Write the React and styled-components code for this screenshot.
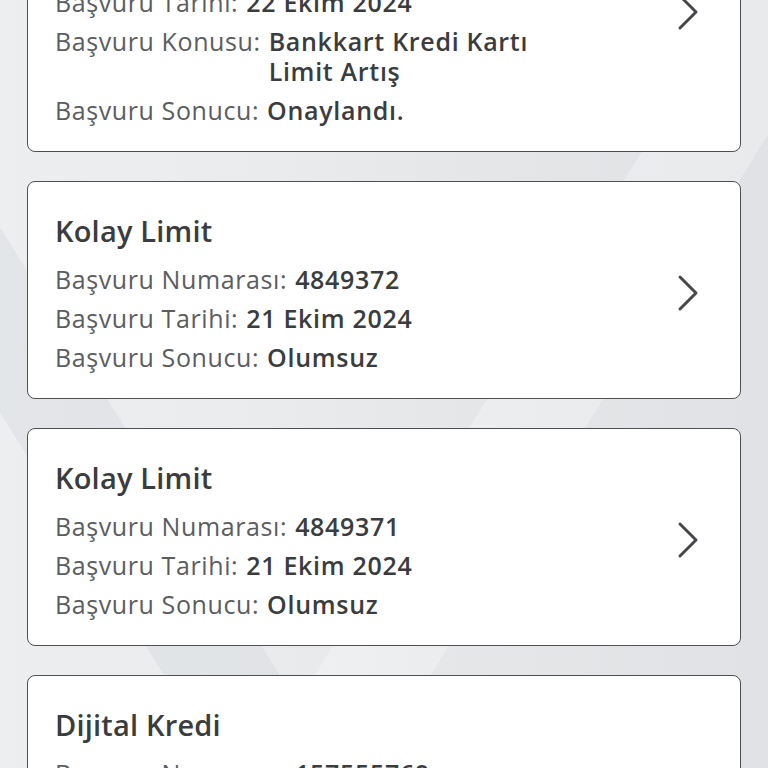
import React, { useLayoutEffect, useRef } from "react";
import styled, { createGlobalStyle } from "styled-components";

const applications = [
  {
    title: "Bankkart Limit Artış",
    rows: [
      { label: "Başvuru Numarası:", value: "4851204" },
      { label: "Başvuru Tarihi:", value: "22 Ekim 2024" },
      { label: "Başvuru Konusu:", value: "Bankkart Kredi Kartı Limit Artış" },
      { label: "Başvuru Sonucu:", value: "Onaylandı." },
    ],
  },
  {
    title: "Kolay Limit",
    rows: [
      { label: "Başvuru Numarası:", value: "4849372" },
      { label: "Başvuru Tarihi:", value: "21 Ekim 2024" },
      { label: "Başvuru Sonucu:", value: "Olumsuz" },
    ],
  },
  {
    title: "Kolay Limit",
    rows: [
      { label: "Başvuru Numarası:", value: "4849371" },
      { label: "Başvuru Tarihi:", value: "21 Ekim 2024" },
      { label: "Başvuru Sonucu:", value: "Olumsuz" },
    ],
  },
  {
    title: "Dijital Kredi",
    rows: [
      { label: "Başvuru Numarası:", value: "157555769" },
      { label: "Başvuru Tarihi:", value: "18 Ekim 2024" },
      { label: "Başvuru Sonucu:", value: "Olumsuz" },
    ],
  },
];

const GlobalStyle = createGlobalStyle`
  html, body {
    margin: 0;
    padding: 0;
  }
  body {
    font-family: "Open Sans", "Noto Sans", sans-serif;
    background-color: #e7e9eb;
  }
  * {
    box-sizing: border-box;
  }
`;

// soft grey facets behind the list
const Viewport = styled.div`
  height: 100vh;
  overflow-y: auto;
  scrollbar-width: none;
  background:
    linear-gradient(122deg, transparent 0 58%, rgba(255, 255, 255, 0.28) 58% 66%, transparent 66%),
    linear-gradient(58deg, transparent 0 22%, rgba(205, 208, 212, 0.3) 22% 30%, transparent 30%),
    linear-gradient(90deg, #eceef0 0%, #e9ebed 35%, #e3e5e7 70%, #e0e2e5 100%);
  background-attachment: local;

  &::-webkit-scrollbar {
    display: none;
  }
`;

const List = styled.div`
  display: flex;
  flex-direction: column;
  gap: 29px;
  padding: 29px 27px;
`;

const Card = styled.div`
  display: flex;
  align-items: center;
  background: #ffffff;
  border: 1.5px solid #4e5053;
  border-radius: 8px;
  padding: 32px 40px 26px 27px;
`;

const Info = styled.div`
  flex: 1;
  max-width: 505px;
  display: flex;
  flex-direction: column;
`;

const Title = styled.div`
  font-size: 29px;
  line-height: 34px;
  font-weight: 600;
  color: #3a3c3e;
  margin-bottom: 16px;
  letter-spacing: 0.2px;
`;

const Rows = styled.div`
  display: flex;
  flex-direction: column;
  gap: 9px;
`;

const Row = styled.div`
  display: flex;
  align-items: flex-start;
  font-size: 25px;
  line-height: 30px;
`;

const Label = styled.span`
  flex: none;
  color: #5b5d60;
  font-weight: 400;
  letter-spacing: 0.6px;
  margin-right: 8px;
`;

const Value = styled.span`
  color: #3a3c3e;
  font-weight: 600;
  letter-spacing: 0.7px;
`;

const Chevron = styled.svg`
  flex: none;
  width: 24px;
  height: 38px;
  margin-left: auto;
`;

function ChevronRight() {
  return (
    <Chevron viewBox="0 0 24 38" fill="none">
      <polyline
        points="4,3 20,19 4,35"
        stroke="#45474a"
        strokeWidth="3"
        strokeLinecap="round"
        strokeLinejoin="round"
      />
    </Chevron>
  );
}

export default function App() {
  const ref = useRef(null);

  useLayoutEffect(() => {
    if (ref.current) ref.current.scrollTop = 164;
  }, []);

  return (
    <>
      <GlobalStyle />
      <Viewport ref={ref}>
        <List>
          {applications.map((app, i) => (
            <Card key={i}>
              <Info>
                <Title>{app.title}</Title>
                <Rows>
                  {app.rows.map((row) => (
                    <Row key={row.label}>
                      <Label>{row.label}</Label>
                      <Value>{row.value}</Value>
                    </Row>
                  ))}
                </Rows>
              </Info>
              <ChevronRight />
            </Card>
          ))}
        </List>
      </Viewport>
    </>
  );
}
